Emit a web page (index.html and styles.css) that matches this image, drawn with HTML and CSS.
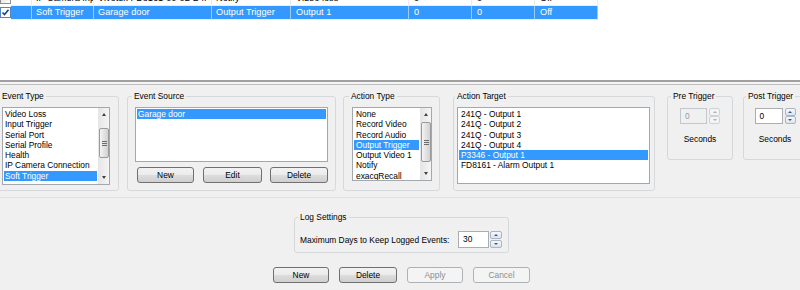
FILE: index.html
```html
<!DOCTYPE html>
<html lang="en">
<head>
    <meta charset="UTF-8">
    <title>Event Linking</title>
    <link rel="stylesheet" href="styles.css">
</head>
<body>

<div class="grid">
    <div class="grid-rows">
        <div class="row">
            <div class="cell c-box"><span class="check"></span></div>
            <div class="cell c-blank"></div>
            <div class="cell c-name">IP Camera Input 1</div>
            <div class="cell c-source">Vivotek FD8161-00-02-B4F</div>
            <div class="cell c-action">Notify</div>
            <div class="cell c-target">Video loss</div>
            <div class="cell c-num">0</div>
            <div class="cell c-num">0</div>
            <div class="cell c-num">Off</div>
        </div>
        <div class="row selected">
            <div class="cell c-box">
                <span class="check">
                    <svg width="9" height="9" viewBox="0 0 9 9"><path d="M1.5 4.5 L3.5 6.5 L7.5 1.8" stroke="#22407e" stroke-width="1.6" fill="none"/></svg>
                </span>
            </div>
            <div class="cell c-blank"></div>
            <div class="cell c-name">Soft Trigger</div>
            <div class="cell c-source">Garage door</div>
            <div class="cell c-action">Output Trigger</div>
            <div class="cell c-target">Output 1</div>
            <div class="cell c-num">0</div>
            <div class="cell c-num">0</div>
            <div class="cell c-num">Off</div>
        </div>
    </div>
</div>

<div class="splitter"></div>

<div class="panel">
    <div class="groups">
        <fieldset class="group g-type">
            <legend>Event Type</legend>
            <div class="listbox lb-type">
                <div class="items">
                    <div class="item">Video Loss</div>
                    <div class="item">Input Trigger</div>
                    <div class="item">Serial Port</div>
                    <div class="item">Serial Profile</div>
                    <div class="item">Health</div>
                    <div class="item">IP Camera Connection</div>
                    <div class="item active">Soft Trigger</div>
                </div>
                <div class="scrollbar">
                    <div class="sb-btn"><span class="arrow-up"></span></div>
                    <div class="sb-track"><div class="sb-thumb thumb-type"><span class="grip"></span></div></div>
                    <div class="sb-btn"><span class="arrow-down"></span></div>
                </div>
            </div>
        </fieldset>

        <fieldset class="group g-source">
            <legend>Event Source</legend>
            <div class="listbox lb-source">
                <div class="items">
                    <div class="item active">Garage door</div>
                </div>
            </div>
            <div class="source-buttons">
                <button class="btn btn-new">New</button>
                <button class="btn btn-edit">Edit</button>
                <button class="btn btn-delete">Delete</button>
            </div>
        </fieldset>

        <fieldset class="group g-action">
            <legend>Action Type</legend>
            <div class="listbox lb-action">
                <div class="items">
                    <div class="item">None</div>
                    <div class="item">Record Video</div>
                    <div class="item">Record Audio</div>
                    <div class="item active">Output Trigger</div>
                    <div class="item">Output Video 1</div>
                    <div class="item">Notify</div>
                    <div class="item">exacqRecall</div>
                </div>
                <div class="scrollbar">
                    <div class="sb-btn"><span class="arrow-up"></span></div>
                    <div class="sb-track"><div class="sb-thumb thumb-action"><span class="grip"></span></div></div>
                    <div class="sb-btn"><span class="arrow-down"></span></div>
                </div>
            </div>
        </fieldset>

        <fieldset class="group g-target">
            <legend>Action Target</legend>
            <div class="listbox lb-target">
                <div class="items">
                    <div class="item">241Q - Output 1</div>
                    <div class="item">241Q - Output 2</div>
                    <div class="item">241Q - Output 3</div>
                    <div class="item">241Q - Output 4</div>
                    <div class="item active">P3346 - Output 1</div>
                    <div class="item">FD8161 - Alarm Output 1</div>
                </div>
            </div>
        </fieldset>

        <fieldset class="group g-pre">
            <legend>Pre Trigger</legend>
            <div class="spin disabled">
                <div class="spin-field">0</div>
                <div class="spin-btns">
                    <div class="spin-btn"><span class="arrow-up"></span></div>
                    <div class="spin-btn"><span class="arrow-down"></span></div>
                </div>
            </div>
            <div class="unit">Seconds</div>
        </fieldset>

        <fieldset class="group g-post">
            <legend>Post Trigger</legend>
            <div class="spin">
                <div class="spin-field">0</div>
                <div class="spin-btns">
                    <div class="spin-btn"><span class="arrow-up"></span></div>
                    <div class="spin-btn"><span class="arrow-down"></span></div>
                </div>
            </div>
            <div class="unit">Seconds</div>
        </fieldset>
    </div>

    <div class="divider"></div>

    <div class="log-row">
        <fieldset class="group g-log">
            <legend>Log Settings</legend>
            <div class="log-line">
                <span>Maximum Days to Keep Logged Events:</span>
                <div class="spin spin-log">
                    <div class="spin-field">30</div>
                    <div class="spin-btns">
                        <div class="spin-btn"><span class="arrow-up"></span></div>
                        <div class="spin-btn"><span class="arrow-down"></span></div>
                    </div>
                </div>
            </div>
        </fieldset>
    </div>

    <div class="actions">
        <button class="btn w56">New</button>
        <button class="btn w58">Delete</button>
        <button class="btn w56" disabled>Apply</button>
        <button class="btn w57" disabled>Cancel</button>
    </div>
</div>

</body>
</html>
```

FILE: styles.css
```css
* {
    box-sizing: border-box;
}
body {
    margin: 0;
    width: 800px;
    height: 290px;
    overflow: hidden;
    font-family: "Liberation Sans", Arial, sans-serif;
    color: #000;
    background-color: #f0f0f0;
}

/* event list */
.grid {
    height: 80px;
    overflow: hidden;
    background-color: #fff;
}
.grid-rows {
    margin-top: -8px;
}
.row {
    display: flex;
    height: 14px;
}
.cell {
    flex-shrink: 0;
    height: 14px;
    padding-left: 4px;
    border-right: 1px solid #ececec;
    border-bottom: 1px solid #ececec;
    font-size: 9.2px;
    line-height: 13px;
    white-space: nowrap;
    overflow: hidden;
}
.c-box {
    width: 11px;
    padding: 1px 0 0 0;
    border: none;
    background-color: #fff;
}
.c-blank { width: 21px; }
.c-name { width: 62px; }
.c-source { width: 118px; }
.c-action { width: 79px; }
.c-target { width: 118px; padding-left: 5px; }
.c-num { width: 63px; padding-left: 5px; }
.selected .cell {
    background-color: #3399ff;
    color: #fff;
    border-right-color: #9ccbfb;
}
.selected .c-box {
    background-color: #fff;
}
.check {
    display: flex;
    align-items: center;
    justify-content: center;
    width: 11px;
    height: 11px;
    border: 1px solid #8e8f8f;
    background: linear-gradient(135deg, #dcdcdc, #fff);
}
.selected .check {
    border-color: #4f88c6;
    background: #fff;
}

.splitter {
    height: 5px;
    border-top: 2px solid #a0a0a0;
    border-bottom: 1px solid #bdbdbd;
    background-color: #f4f4f4;
}

/* lower panel */
.panel {
    height: 205px;
    padding-top: 5px;
    font-size: 8.4px;
    background-color: #f0f0f0;
}
.groups {
    display: flex;
    height: 101px;
}
.group {
    flex-shrink: 0;
    margin: 0;
    padding: 0;
    min-width: 0;
    border: 1px solid #d5d9dc;
    border-radius: 3px;
}
.group legend {
    padding: 0 2px;
    line-height: 12px;
}
.g-type { width: 122px; margin-left: -3px; }
.g-type legend { margin-left: 2px; }
.g-source { width: 209px; margin-left: 8px; }
.g-source legend { margin-left: 4px; }
.g-action { width: 97px; margin-left: 7px; }
.g-action legend { margin-left: 5px; }
.g-target { width: 202px; margin-left: 13px; }
.g-target legend { margin-left: 1px; }
.g-pre { width: 66px; height: 70px; margin-left: 12px; align-self: flex-start; }
.g-pre legend { margin-left: 3px; }
.g-post { width: 64px; height: 70px; margin-left: 10px; align-self: flex-start; }
.g-post legend { margin-left: 2px; }

.listbox {
    display: flex;
    margin-top: 5px;
    border: 1px solid #a3a8ae;
    background-color: #fff;
    overflow: hidden;
}
.lb-type { width: 108px; height: 78px; margin-left: 4px; }
.lb-source { width: 193px; height: 55px; margin-left: 7px; }
.lb-action { width: 80px; height: 74px; margin-left: 8px; }
.lb-target { width: 193px; height: 77px; margin-left: 3px; }
.items {
    flex: 1;
    padding: 1px;
    overflow: hidden;
}
.item {
    height: 10.3px;
    padding-left: 1px;
    line-height: 10.3px;
    white-space: nowrap;
}
.lb-target .item,
.lb-action .item {
    padding-left: 2px;
}
.item.active {
    background-color: #3399ff;
    color: #fff;
}

.scrollbar {
    display: flex;
    flex-direction: column;
    width: 11px;
    border-left: 1px solid #e6e6e6;
    background: linear-gradient(to right, #e6e6e6, #f5f5f5);
}
.sb-btn {
    display: flex;
    align-items: center;
    justify-content: center;
    height: 13px;
}
.sb-track {
    flex: 1;
}
.sb-thumb {
    display: flex;
    align-items: center;
    justify-content: center;
    width: 10px;
    border: 1px solid #9a9a9a;
    border-radius: 2px;
    background: linear-gradient(to right, #f4f4f4, #e2e2e2 50%, #d2d2d2);
}
.thumb-type { margin-top: 7px; height: 30px; }
.thumb-action { margin-top: 1px; height: 40px; }
.grip {
    width: 5px;
    height: 5px;
    border-top: 1px solid #6b6b6b;
    border-bottom: 1px solid #6b6b6b;
    background: linear-gradient(#6b6b6b, #6b6b6b) center / 5px 1px no-repeat;
}
.arrow-up,
.arrow-down {
    width: 0;
    height: 0;
    border-left: 2.5px solid transparent;
    border-right: 2.5px solid transparent;
}
.arrow-up { border-bottom: 3px solid #404040; }
.arrow-down { border-top: 3px solid #404040; }

.source-buttons {
    display: flex;
    margin-top: 5px;
    margin-left: 9px;
}
.btn {
    height: 16px;
    padding: 0;
    border: 1px solid #707070;
    border-radius: 3px;
    background: linear-gradient(#f2f2f2, #ebebeb 50%, #dddddd 51%, #cfcfcf);
    font-family: "Liberation Sans", Arial, sans-serif;
    font-size: 8.4px;
    color: #000;
}
.btn:disabled {
    border-color: #adb2b5;
    background: #f4f4f4;
    color: #8d8d8d;
}
.btn-new { width: 57px; }
.btn-edit { width: 59px; margin-left: 9px; }
.btn-delete { width: 58px; margin-left: 8px; }

/* spin boxes */
.spin {
    display: flex;
    justify-content: center;
    gap: 2px;
    margin-top: 6px;
}
.spin-field {
    width: 27px;
    height: 16px;
    padding-left: 4px;
    border: 1px solid #abadb3;
    background-color: #fff;
    line-height: 14px;
}
.g-post .spin-field { width: 28px; }
.spin-btns {
    display: flex;
    flex-direction: column;
    justify-content: space-between;
    width: 11px;
    height: 16px;
}
.spin-btn {
    display: flex;
    align-items: center;
    justify-content: center;
    height: 8px;
    border: 1px solid #a9b6c5;
    border-radius: 2px;
    background: linear-gradient(#f6f8fb, #dde4ec);
}
.spin .arrow-up { border-bottom-color: #3f5a8a; border-bottom-width: 2.5px; }
.spin .arrow-down { border-top-color: #3f5a8a; border-top-width: 2.5px; }
.spin.disabled .spin-field {
    border-color: #c3c7cb;
    background-color: #f0f0f0;
    color: #9a9a9a;
}
.spin.disabled .spin-btn {
    border-color: #cfd3d7;
    background: #f4f4f4;
}
.spin.disabled .arrow-up { border-bottom-color: #b0b0b0; }
.spin.disabled .arrow-down { border-top-color: #b0b0b0; }
.unit {
    margin-top: 9px;
    text-align: center;
    line-height: 12px;
}

.divider {
    margin-top: 6px;
    height: 1px;
    background-color: #e0e0e0;
}

/* log settings */
.log-row {
    display: flex;
    justify-content: center;
    margin-top: 13px;
    padding-left: 3px;
}
.g-log { width: 215px; }
.g-log legend { margin-left: 3px; }
.log-line {
    display: flex;
    align-items: center;
    justify-content: space-between;
    margin: 8px 0 4px 0;
    padding: 0 6px 0 5px;
}
.spin-log {
    margin-top: 0;
    gap: 1px;
}
.spin-log .spin-field {
    width: 31px;
    height: 17px;
    line-height: 15px;
}
.spin-log .spin-btns {
    width: 12px;
    height: 17px;
}

.actions {
    display: flex;
    justify-content: center;
    gap: 10px;
    margin-top: 14px;
    padding-left: 3px;
}
.w56 { width: 56px; }
.w57 { width: 57px; }
.w58 { width: 58px; }
```
